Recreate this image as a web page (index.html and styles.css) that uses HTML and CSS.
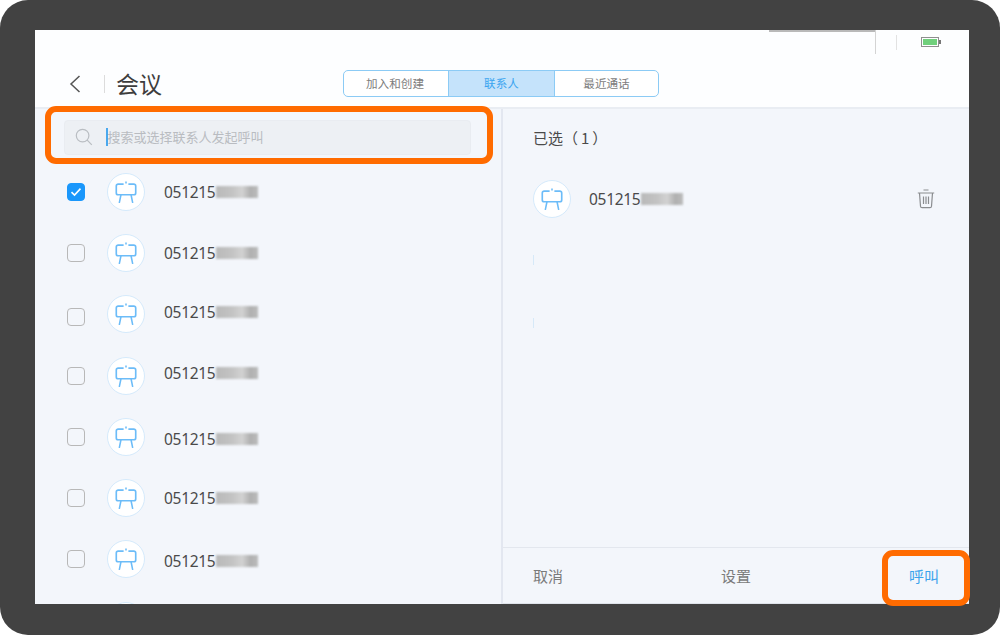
FILE: index.html
```html
<!DOCTYPE html>
<html lang="zh">
<head>
<meta charset="utf-8">
<title>会议</title>
<link rel="stylesheet" href="styles.css">
</head>
<body>
<svg class="defs" width="0" height="0" aria-hidden="true">
  <symbol id="easel" viewBox="0 0 24 24">
    <path d="M12 0.6v2" fill="none" stroke="#6cbcf8" stroke-width="1.7"/>
    <path d="M9.4 3.4H3.4A2 2 0 0 0 1.400 5.400V13A2 2 0 0 0 3.400 15H20.600A2 2 0 0 0 22.600 13V5.400A2 2 0 0 0 20.600 3.400H14.600" fill="none" stroke="#6cbcf8" stroke-width="1.800"/>
    <path d="M6.500 15 4.800 23.400M17.500 15 19.200 23.400" fill="none" stroke="#6cbcf8" stroke-width="1.700" stroke-linecap="round"/>
  </symbol>
</svg>
<div class="device">
  <div class="screen">
    <header class="top">
      <div class="status">
        <span class="status-line"></span>
        <span class="status-sep"></span>
        <span class="status-sep-short"></span>
        <span class="battery"><span class="battery-fill"></span></span>
      </div>
      <div class="titlebar">
        <svg class="back" width="12" height="18" viewBox="0 0 12 18"><path d="M10.500 1 2 9l8.500 8" fill="none" stroke="#555" stroke-width="1.500"/></svg>
        <span class="title-sep"></span>
        <h1 class="title">会议</h1>
        <div class="tabs">
          <div class="tab tab-first">加入和创建</div>
          <div class="tab tab-active">联系人</div>
          <div class="tab">最近通话</div>
        </div>
      </div>
    </header>
    <main class="body">
      <section class="left">
        <div class="search-wrap">
          <div class="search">
            <svg class="search-icon" width="18" height="18" viewBox="0 0 18 18"><circle cx="7.600" cy="7.600" r="6.300" fill="none" stroke="#b9bdc2" stroke-width="1.200"/><path d="m12.200 12.200 4.600 4.600" stroke="#b9bdc2" stroke-width="1.200"/></svg>
            <span class="caret"></span>
            <span class="placeholder">搜索或选择联系人发起呼叫</span>
          </div>
        </div>
        <div class="list">
          <div class="row">
            <span class="check check-on"><svg width="12" height="10" viewBox="0 0 12 10"><path d="M1.500 5.200 4.500 8l6-6.400" fill="none" stroke="#fff" stroke-width="1.600"/></svg></span>
            <span class="avatar"><svg class="easel"><use href="#easel"/></svg></span>
            <span class="num">051215<span class="blur"></span></span>
          </div>
          <div class="row">
            <span class="check"></span>
            <span class="avatar"><svg class="easel"><use href="#easel"/></svg></span>
            <span class="num">051215<span class="blur"></span></span>
          </div>
          <div class="row">
            <span class="check check-low"></span>
            <span class="avatar"><svg class="easel"><use href="#easel"/></svg></span>
            <span class="num num-up">051215<span class="blur"></span></span>
          </div>
          <div class="row">
            <span class="check"></span>
            <span class="avatar"><svg class="easel"><use href="#easel"/></svg></span>
            <span class="num num-up-more">051215<span class="blur"></span></span>
          </div>
          <div class="row">
            <span class="check"></span>
            <span class="avatar"><svg class="easel"><use href="#easel"/></svg></span>
            <span class="num num-down">051215<span class="blur"></span></span>
          </div>
          <div class="row">
            <span class="check"></span>
            <span class="avatar"><svg class="easel"><use href="#easel"/></svg></span>
            <span class="num">051215<span class="blur"></span></span>
          </div>
          <div class="row">
            <span class="check"></span>
            <span class="avatar"><svg class="easel"><use href="#easel"/></svg></span>
            <span class="num num-down">051215<span class="blur"></span></span>
          </div>
          <div class="row">
            <span class="check"></span>
            <span class="avatar"><svg class="easel"><use href="#easel"/></svg></span>
          </div>
        </div>
      </section>
      <section class="right">
        <div class="selected">
          <h2 class="selected-title">已选<span class="count">（1）</span></h2>
          <div class="sel-row">
            <span class="avatar"><svg class="easel"><use href="#easel"/></svg></span>
            <span class="num">051215<span class="blur"></span></span>
            <svg class="trash" width="18" height="20" viewBox="0 0 18 20"><path d="M6.500 1h5M.8 4h16.400M2.500 4l1 13.200a1.600 1.600 0 0 0 1.600 1.500h7.800a1.600 1.600 0 0 0 1.600-1.500L15.500 4" fill="none" stroke="#8b8d90" stroke-width="1.200"/><path d="M6.500 7.500v7.500M9 7.500v7.500M11.500 7.500v7.500" stroke="#8b8d90" stroke-width="1.200"/></svg>
          </div>
          <span class="tick"></span>
          <span class="tick"></span>
        </div>
        <footer class="actions">
          <span class="action">取消</span>
          <span class="action">设置</span>
          <span class="action action-call">呼叫</span>
        </footer>
      </section>
    </main>
  </div>
  <div class="hl hl-search"></div>
  <div class="hl hl-call"></div>
</div>
</body>
</html>
```

FILE: styles.css
```css
* { box-sizing: border-box; }
html, body { margin: 0; padding: 0; background: #fff; }
body {
  width: 1000px;
  height: 635px;
  overflow: hidden;
  font-family: "Noto Sans", "Noto Sans CJK SC", sans-serif;
}
.defs { position: absolute; }
.device {
  position: relative;
  width: 1000px;
  height: 635px;
  padding: 30px 31px 31px 35px;
  background: #424242;
  border-radius: 28px;
}
.screen {
  width: 934px;
  height: 574px;
  display: flex;
  flex-direction: column;
  overflow: hidden;
  background: #f3f6fb;
}
.top {
  flex: none;
  height: 79px;
  background: #fdfeff;
  border-bottom: 2px solid #e9edf3;
}
.status {
  display: flex;
  height: 24px;
  padding-left: 734px;
  align-items: flex-start;
}
.status-line {
  width: 106px;
  height: 2px;
  background: #b9b9b9;
  flex: none;
}
.status-sep {
  flex: none;
  width: 1px;
  height: 24px;
  background: #d4d4d4;
}
.status-sep-short {
  flex: none;
  width: 1px;
  height: 15px;
  margin: 5px 0 0 20px;
  background: #e2e2e2;
}
.battery {
  flex: none;
  margin: 7px 0 0 24px;
  width: 18px;
  height: 10px;
  border: 1px solid #8f8f8f;
  padding: 1px;
  position: relative;
}
.battery::after {
  content: "";
  position: absolute;
  right: -3px;
  top: 2px;
  width: 2px;
  height: 4px;
  background: #777;
}
.battery-fill { display: block; height: 100%; background: #70d07c; }
.titlebar {
  display: flex;
  align-items: center;
  height: 53px;
  padding: 7px 0 0 34px;
}
.back { flex: none; }
.title-sep { flex: none; width: 1px; height: 18px; margin-left: 23px; background: #dcdcdc; }
.title {
  margin: 0 0 2px 11px;
  font-family: "Noto Sans CJK SC", sans-serif;
  font-size: 23px;
  font-weight: 400;
  line-height: 30px;
  color: #3d3d3d;
}
.tabs {
  display: flex;
  margin: 0 0 2px 181px;
  width: 316px;
  height: 27px;
  border: 1px solid #8ccbf5;
  border-radius: 5px;
  overflow: hidden;
  background: #fff;
}
.tab {
  flex: 1;
  display: flex;
  align-items: center;
  justify-content: center;
  font-family: "Noto Sans CJK SC", sans-serif;
  font-size: 11.6px;
  color: #7d7d7d;
}
.tab-first { flex: none; width: 104px; padding-right: 2px; }
.tab-active {
  flex: none;
  width: 107px;
  background: #c5e3fb;
  color: #3ba5f0;
  border-left: 1px solid #8ccbf5;
  border-right: 1px solid #8ccbf5;
}
.body { flex: 1; display: flex; min-height: 0; }
.left {
  flex: none;
  width: 468px;
  border-right: 2px solid #e3e7f0;
  display: flex;
  flex-direction: column;
  min-height: 0;
}
.search-wrap { flex: none; height: 52px; padding: 11px 30px 0 29px; }
.search {
  display: flex;
  align-items: center;
  height: 35px;
  padding-left: 10px;
  background: #edf0f4;
  border: 1px solid #e9ecf1;
  border-radius: 4px;
}
.search-icon { flex: none; margin-bottom: 1px; }
.caret { flex: none; width: 1.500px; height: 18px; margin: 0 0 1px 13px; background: #4aa8ee; }
.placeholder {
  margin-bottom: 2px;
  font-family: "Noto Sans CJK SC", sans-serif;
  font-size: 13px;
  color: #b9bcc1;
}
.list { flex: 1; min-height: 0; }
.row {
  display: flex;
  align-items: center;
  height: 61.3px;
  padding-left: 32px;
}
.check {
  flex: none;
  width: 18px;
  height: 18px;
  border: 1.500px solid #b8b8b8;
  border-radius: 4px;
  display: flex;
  align-items: center;
  justify-content: center;
}
.check-on { background: #1a97fb; border-color: #1a97fb; }
.check-low { margin-top: 6px; }
.avatar {
  flex: none;
  width: 38px;
  height: 38px;
  margin-left: 22px;
  border: 1px solid #d5eafb;
  border-radius: 50%;
  background: #fff;
  display: flex;
  align-items: center;
  justify-content: center;
}
.easel { width: 22px; height: 22px; }
.num {
  display: flex;
  align-items: center;
  margin-left: 19px;
  font-size: 15.500px;
  letter-spacing: -0.3px;
  line-height: 20px;
  color: #4a4a4a;
}
.num-up { margin-top: -4px; }
.num-up-more { margin-top: -6px; }
.num-down { margin-top: 4px; }
.blur {
  width: 42px;
  height: 12px;
  margin-left: 1px;
  background: linear-gradient(90deg, #b9b9b9 0%, #c4c4c4 40%, #d2d2d2 62%, #b0b0b0 82%, #bcbcbc 100%);
  filter: blur(0.800px);
}
.right { flex: 1; min-width: 0; display: flex; flex-direction: column; }
.selected { flex: 1; min-height: 0; padding: 18px 30px 0; }
.selected-title {
  margin: 0;
  font-family: "Noto Sans CJK SC", sans-serif;
  font-size: 15px;
  font-weight: 400;
  line-height: 22px;
  color: #4a4a4a;
}
.count { letter-spacing: 3px; }
.sel-row {
  display: flex;
  align-items: center;
  height: 38px;
  margin-top: 31px;
}
.sel-row .avatar { margin-left: 0; }
.sel-row .num { margin-left: 18px; }
.trash { margin-left: auto; margin-right: 4px; }
.tick { display: block; width: 1px; height: 10px; background: #d6e9f8; margin-top: 37px; }
.tick + .tick { margin-top: 53px; }
.actions {
  flex: none;
  height: 57px;
  display: flex;
  align-items: center;
  justify-content: space-between;
  padding: 0 30px;
  border-top: 1px solid #e3e7ee;
  border-bottom: 1px solid #dfe3ea;
}
.action {
  font-family: "Noto Sans CJK SC", sans-serif;
  font-size: 15px;
  color: #7b7b7b;
}
.action-call { color: #3aa3ec; }
.hl {
  position: absolute;
  border: 6px solid #ff6b00;
}
.hl-search { left: 45px; top: 106px; width: 448px; height: 58px; border-radius: 11px; }
.hl-call { left: 882px; top: 550px; width: 88px; height: 56px; border-radius: 11px; }
```
